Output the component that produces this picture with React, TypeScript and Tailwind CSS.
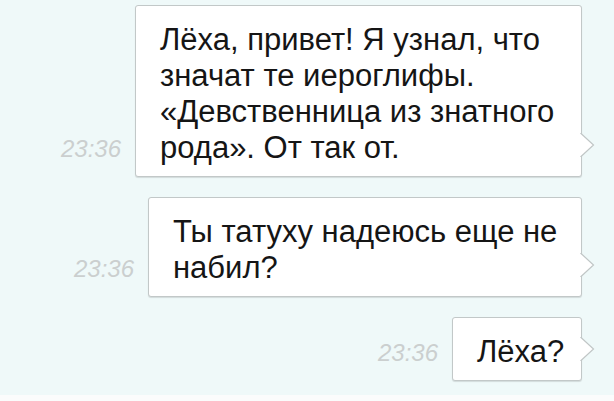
import React from "react";

function Tail() {
  return (
    <svg
      className="absolute left-[100%] bottom-[19px] -ml-[1px]"
      width="15"
      height="24"
      viewBox="0 0 15 24"
    >
      <path d="M0.5 0 L13.5 12 L0.5 24 Z" fill="#ffffff" />
      <path d="M0.5 0 L13.5 12 L0.5 24" fill="none" stroke="#c0c6c6" strokeWidth="1.2" />
    </svg>
  );
}

function Row({
  time,
  width,
  lines,
}: {
  time: string;
  width: string;
  lines: string[];
}) {
  return (
    <div className="flex items-end justify-end">
      <div className="mr-[14px] mb-[16px] text-[24px] leading-none italic text-[#cbcfcf] font-['Liberation_Sans',Arial,sans-serif]">
        {time}
      </div>
      <div
        className={`relative ${width} bg-white border border-[#c2c8c8] rounded-[3px] shadow-[0_1px_1px_rgba(0,0,0,0.12)] pl-[24px] pr-[10px] pt-[16px] pb-[10px]`}
      >
        <div className="text-[31px] leading-[36px] text-[#151515] font-['Liberation_Sans',Arial,sans-serif] whitespace-nowrap">
          {lines.map((l, i) => (
            <div key={i}>{l}</div>
          ))}
        </div>
        <Tail />
      </div>
    </div>
  );
}

export default function App() {
  return (
    <div className="w-[614px] h-[401px] bg-[#eff9f9] overflow-hidden flex flex-col">
      <div className="flex flex-col pt-[5px] pr-[32px] gap-[20px]">
        <Row
          time="23:36"
          width="w-[447px]"
          lines={[
            "Лёха, привет! Я узнал, что",
            "значат те иероглифы.",
            "«Девственница из знатного",
            "рода». От так от.",
          ]}
        />
        <Row
          time="23:36"
          width="w-[434px]"
          lines={["Ты татуху надеюсь еще не", "набил?"]}
        />
        <Row time="23:36" width="w-[130px]" lines={["Лёха?"]} />
      </div>
      <div className="flex-1" />
      <div className="h-[6px] bg-[#fbfcfc]" />
    </div>
  );
}
